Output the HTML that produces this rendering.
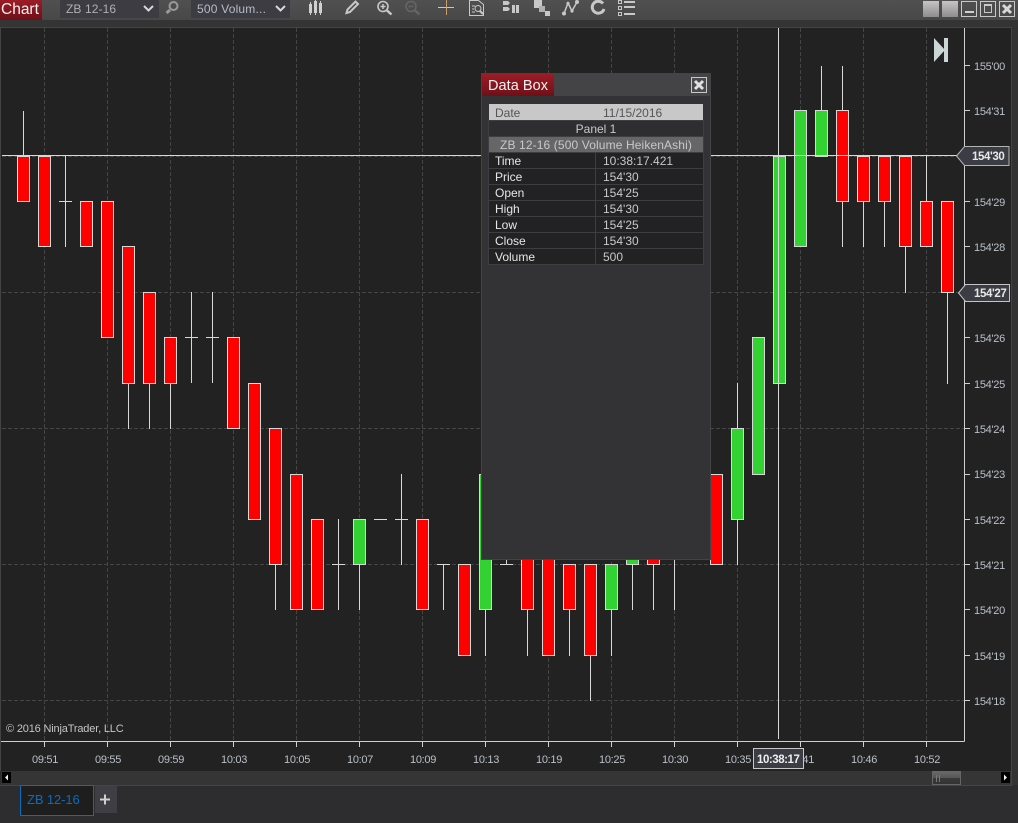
<!DOCTYPE html>
<html><head><meta charset="utf-8"><style>
html,body{margin:0;padding:0;background:#2d2d30;}
body{width:1018px;height:823px;overflow:hidden;position:relative;font-family:"Liberation Sans",sans-serif;}
svg{position:absolute;left:0;top:0;}
text{font-family:"Liberation Sans",sans-serif;}
.r{fill:#f00;stroke:#d8d8d8;stroke-width:1;}
.g{fill:#32d232;stroke:#d8d8d8;stroke-width:1;}
.ax{font-size:11px;fill:#b9c0c6;letter-spacing:-.3px;}
.dt{font-size:12px;fill:#e6e6e6;}
.dv{font-size:12px;fill:#c8c8c8;}
</style></head><body>
<svg width="1018" height="823" viewBox="0 0 1018 823">
<defs>
<linearGradient id="red" x1="0" y1="0" x2="0" y2="1"><stop offset="0" stop-color="#9c1c26"/><stop offset="1" stop-color="#6e1018"/></linearGradient>
<linearGradient id="tb" x1="0" y1="0" x2="0" y2="1"><stop offset="0" stop-color="#505050"/><stop offset="1" stop-color="#484848"/></linearGradient>
<linearGradient id="btn" x1="0" y1="0" x2="0" y2="1"><stop offset="0" stop-color="#c6c4c4"/><stop offset="1" stop-color="#8e8c8c"/></linearGradient>
<linearGradient id="th" x1="0" y1="0" x2="0" y2="1"><stop offset="0" stop-color="#6a6a6a"/><stop offset=".5" stop-color="#555"/><stop offset=".5" stop-color="#3a3a3a"/><stop offset="1" stop-color="#333"/></linearGradient>
</defs>

<!-- toolbar -->
<rect x="0" y="0" width="1018" height="20" fill="url(#tb)"/>
<rect x="0" y="20" width="1018" height="7" fill="#343434"/>
<rect x="0" y="27" width="1012" height="1" fill="#444"/>
<rect x="0" y="0" width="42" height="20" fill="url(#red)"/>
<text x="1" y="14" font-size="15.500" fill="#f2f2f2">Chart</text>
<rect x="60" y="0" width="99" height="18" fill="#3c3c42"/>
<text x="66" y="13" font-size="12" letter-spacing=".1" fill="#b0b0b0">ZB 12-16</text>
<path d="M144 6l4.500 4.500 4.500-4.500" fill="none" stroke="#d8d8d8" stroke-width="2"/>
<g fill="none" stroke="#9a9a9a"><circle cx="173.500" cy="6" r="4" stroke-width="2"/><path d="M170 10l-3.500 3" stroke-width="3"/></g>
<rect x="191" y="0" width="99" height="18" fill="#3c3c42"/>
<text x="197" y="13" font-size="12" letter-spacing=".2" fill="#b4bcc8">500 Volum...</text>
<path d="M276 6l4.500 4.500 4.500-4.500" fill="none" stroke="#d8d8d8" stroke-width="2"/>
<!-- candles icon -->
<g fill="#cfcfcf"><rect x="309" y="4" width="3" height="9"/><rect x="310" y="2" width="1" height="13"/><rect x="314" y="1" width="3" height="12"/><rect x="315" y="0" width="1" height="15"/><rect x="319" y="3" width="3" height="10"/><rect x="320" y="1" width="1" height="14"/></g>
<!-- pencil -->
<path d="M346.500 13l1-3.500 8-8 2.500 2.500-8 8z" fill="none" stroke="#c8c8c8" stroke-width="2"/>
<!-- zoom in -->
<g fill="none" stroke="#c8c8c8"><circle cx="383" cy="6.500" r="5" stroke-width="1.600"/><path d="M387 10.500l4.500 4" stroke-width="2.500"/><path d="M380.500 6.500h5M383 4v5" stroke-width="1.500"/></g>
<!-- zoom out -->
<g fill="none" stroke="#656565"><circle cx="411" cy="6.500" r="5" stroke-width="1.600"/><path d="M415 10.500l4.500 4" stroke-width="2.500"/><path d="M408.500 6.500h5" stroke-width="1.500"/></g>
<!-- crosshair -->
<path d="M438 7.500h16" stroke="#c8c8c8"/><path d="M446.500 0v15" stroke="#c8a070"/>
<!-- data box icon -->
<g fill="none" stroke="#c8c8c8"><path d="M469.500 .5h9l5 4v11h-14z"/><circle cx="478" cy="8.500" r="3"/><path d="M480 11l3 3" stroke-width="2"/><path d="M472 6h3M472 9h2M472 12h3"/></g>
<!-- orders icon -->
<g fill="#c8c8c8"><path d="M503 1h5l2 2-2 2h-5zM503 7h5l2 2-2 2h-5z"/><rect x="512" y="5" width="3" height="8"/><rect x="516" y="5" width="3" height="8"/></g>
<!-- stacked -->
<g fill="#c8c8c8"><rect x="534" y="0" width="8" height="8"/><rect x="539" y="6" width="6" height="6" fill="#b0b0b0"/><rect x="545" y="11" width="5" height="5"/></g>
<!-- drawing -->
<g fill="none" stroke="#c8c8c8" stroke-width="1.500"><path d="M564 13.500l4-10.500 4 8 5-9"/></g><g fill="#c8c8c8"><circle cx="564" cy="13.500" r="2"/><circle cx="568" cy="3.500" r="1.600"/><circle cx="572" cy="11" r="1.600"/><circle cx="577" cy="2" r="2"/></g>
<!-- refresh -->
<path d="M603 3.500A6 6 0 1 0 604 9" fill="none" stroke="#c8c8c8" stroke-width="3"/><path d="M593 2a7 7 0 0 1 7-2v3z" fill="#c8c8c8"/>
<!-- list -->
<g fill="#c8c8c8"><rect x="624" y="1" width="11" height="2"/><rect x="624" y="6" width="11" height="2"/><rect x="624" y="13" width="11" height="2"/></g>
<g fill="none" stroke="#c8c8c8"><rect x="618.500" y=".5" width="3" height="3"/><rect x="618.500" y="6.500" width="3" height="3"/><rect x="618.500" y="12.500" width="3" height="3"/></g>
<!-- window buttons -->
<rect x="923" y="1" width="16" height="16" fill="url(#btn)"/>
<rect x="942" y="1" width="16" height="16" fill="url(#btn)"/>
<g fill="none" stroke="#c8c8c8" stroke-width="1"><rect x="961.500" y="1.500" width="15" height="15"/><rect x="980.500" y="1.500" width="15" height="15"/><rect x="999.500" y="1.500" width="15" height="15"/><rect x="984.500" y="5.500" width="7" height="7"/></g>
<rect x="965" y="11" width="9" height="2" fill="#d0d0d0"/>
<rect x="984" y="4" width="8" height="2" fill="#c8c8c8"/>
<path d="M1003 5l8 8M1011 5l-8 8" stroke="#d8d8d8" stroke-width="3"/>

<!-- chart area -->
<rect x="1" y="28" width="1010" height="743" fill="#222"/>
<rect x="0" y="27" width="1" height="744" fill="#444"/>
<rect x="1011" y="27" width="7" height="758" fill="#333"/>
<rect x="1011" y="27" width="1" height="758" fill="#444"/>
<!-- grid -->
<g stroke="#454545" stroke-dasharray="4 2" fill="none">
<path d="M44.500 28V740M107.500 28V740M170.500 28V740M233.500 28V740M296.500 28V740M359.500 28V740M422.500 28V740M485.500 28V740M548.500 28V740M611.500 28V740M674.500 28V740M737.500 28V740M800.500 28V740M863.500 28V740M926.500 28V740"/>
<path d="M2 156.500H964M2 292.500H964M2 428.500H964M2 564.500H964M2 700.500H964"/>
</g>
<!-- wicks + dojis -->
<path stroke="#d8d8d8" fill="none" d="M23.500 111V156M65.500 156V247M59 201.500H72M128.500 383V429M149.500 383V429M170.500 383V429M191.500 292V383M185 337.500H198M212.500 292V383M206 337.500H219M275.500 564V610M338.500 519V610M332 564.500H345M359.500 564V610M374 519.500H387M401.500 474V565M395 519.500H408M443.500 564V610M437 564.500H450M485.500 609V656M506.500 555V565M500 564.500H513M527.500 609V656M569.500 609V656M590.500 655V701M611.500 609V656M632.500 564V610M653.500 564V610M674.500 555V610M737.500 383V429M737.500 519V565M821.500 66V111M842.500 66V111M842.500 201V247M863.500 201V247M884.500 201V247M905.500 246V293M926.500 156V201M947.500 292V384"/>
<!-- bodies -->
<rect class="r" x="17.500" y="156.500" width="12" height="45"/>
<rect class="r" x="38.500" y="156.500" width="12" height="90"/>
<rect class="r" x="80.500" y="201.500" width="12" height="45"/>
<rect class="r" x="101.500" y="201.500" width="12" height="136"/>
<rect class="r" x="122.500" y="246.500" width="12" height="137"/>
<rect class="r" x="143.500" y="292.500" width="12" height="91"/>
<rect class="r" x="164.500" y="337.500" width="12" height="46"/>
<rect class="r" x="227.500" y="337.500" width="12" height="91"/>
<rect class="r" x="248.500" y="383.500" width="12" height="136"/>
<rect class="r" x="269.500" y="428.500" width="12" height="136"/>
<rect class="r" x="290.500" y="474.500" width="12" height="135"/>
<rect class="r" x="311.500" y="519.500" width="12" height="90"/>
<rect class="g" x="353.500" y="519.500" width="12" height="45"/>
<rect class="r" x="416.500" y="519.500" width="12" height="90"/>
<rect class="r" x="458.500" y="564.500" width="12" height="91"/>
<rect class="g" x="479.500" y="474.500" width="12" height="135"/>
<rect class="r" x="521.500" y="519.500" width="12" height="90"/>
<rect class="r" x="542.500" y="519.500" width="12" height="136"/>
<rect class="r" x="563.500" y="564.500" width="12" height="45"/>
<rect class="r" x="584.500" y="564.500" width="12" height="91"/>
<rect class="g" x="605.500" y="564.500" width="12" height="45"/>
<rect class="g" x="626.500" y="519.500" width="12" height="45"/>
<rect class="r" x="647.500" y="519.500" width="12" height="45"/>
<rect class="r" x="710.500" y="474.500" width="12" height="90"/>
<rect class="g" x="731.500" y="428.500" width="12" height="91"/>
<rect class="g" x="752.500" y="337.500" width="12" height="137"/>
<rect class="g" x="773.500" y="156.500" width="12" height="227"/>
<rect class="g" x="794.500" y="110.500" width="12" height="136"/>
<rect class="g" x="815.500" y="110.500" width="12" height="46"/>
<rect class="r" x="836.500" y="110.500" width="12" height="91"/>
<rect class="r" x="857.500" y="156.500" width="12" height="45"/>
<rect class="r" x="878.500" y="156.500" width="12" height="45"/>
<rect class="r" x="899.500" y="156.500" width="12" height="90"/>
<rect class="r" x="920.500" y="201.500" width="12" height="45"/>
<rect class="r" x="941.500" y="201.500" width="12" height="91"/>
<!-- price line and crosshair -->
<path d="M2 155.500H958" stroke="#d8d8d8"/>
<path d="M778.500 28V739" stroke="#d8d8d8"/>
<!-- axes -->
<path d="M964.500 28V741.500M1 741.500H964.500" stroke="#d0d0d0" fill="none"/>
<path stroke="#d0d0d0" d="M964 65.500h6M964 110.500h6M964 201.500h6M964 246.500h6M964 337.500h6M964 383.500h6M964 428.500h6M964 474.500h6M964 519.500h6M964 564.500h6M964 609.500h6M964 655.500h6M964 700.500h6M44.500 742v5M107.500 742v5M170.500 742v5M233.500 742v5M296.500 742v5M359.500 742v5M422.500 742v5M485.500 742v5M548.500 742v5M611.500 742v5M674.500 742v5M737.500 742v5M800.500 742v5M863.500 742v5M926.500 742v5"/>
<g class="ax">
<text x="974" y="70">155'00</text><text x="974" y="115">154'31</text>
<text x="974" y="206">154'29</text><text x="974" y="251">154'28</text>
<text x="974" y="342">154'26</text><text x="974" y="388">154'25</text><text x="974" y="433">154'24</text><text x="974" y="478">154'23</text><text x="974" y="524">154'22</text><text x="974" y="569">154'21</text><text x="974" y="614">154'20</text><text x="974" y="660">154'19</text><text x="974" y="705">154'18</text>
<text x="32" y="763">09:51</text><text x="95" y="763">09:55</text><text x="158" y="763">09:59</text><text x="221" y="763">10:03</text><text x="284" y="763">10:05</text><text x="347" y="763">10:07</text><text x="410" y="763">10:09</text><text x="473" y="763">10:13</text><text x="536" y="763">10:19</text><text x="599" y="763">10:25</text><text x="662" y="763">10:30</text><text x="725" y="763">10:35</text><text x="788" y="763">10:41</text><text x="851" y="763">10:46</text><text x="914" y="763">10:52</text>
</g>
<text x="6" y="732" font-size="11" letter-spacing="-.17" fill="#c4c4c4">© 2016 NinjaTrader, LLC</text>
<!-- price flags -->
<path d="M956.500 156l8-9.500h44.500v19h-44.500z" fill="#3c3c44" stroke="#b4b4b4"/>
<text x="972" y="160" font-size="11.500" font-weight="bold" letter-spacing="-.4" fill="#e8e8e8">154'30</text>
<path d="M958.500 293l7-8.500h44v17h-44z" fill="#3c3c44" stroke="#c4c4c4"/>
<text x="974" y="297" font-size="11.500" font-weight="bold" letter-spacing="-.4" fill="#e8e8e8">154'27</text>
<!-- time marker -->
<rect x="753.500" y="748.500" width="50" height="20" fill="#3c3c44" stroke="#c8c8c8"/>
<text x="757" y="763" font-size="11.500" font-weight="bold" letter-spacing="-.45" fill="#efefef">10:38:17</text>
<!-- skip icon -->
<path d="M934 38l11 12-11 12z" fill="#cdd6d6"/><rect x="944" y="38" width="4" height="24" fill="#cdd6d6"/>

<!-- data box -->
<rect x="481.500" y="73.500" width="229" height="486" fill="#333335" stroke="#444"/>
<rect x="482" y="74" width="229" height="22" fill="#444446"/>
<rect x="482" y="74" width="72" height="22" fill="url(#red)"/>
<text x="488" y="90" font-size="14.500" letter-spacing=".05" fill="#f2f2f2">Data Box</text>
<rect x="691.500" y="77.500" width="15" height="15" fill="#4a4a4c" stroke="#c8c8c8"/>
<path d="M695 81l8 8M703 81l-8 8" stroke="#e0e0e0" stroke-width="3"/>
<rect x="489" y="104" width="214" height="16" fill="#c8c8c8"/>
<rect x="489" y="120" width="214" height="17" fill="#2e2e30"/>
<rect x="489" y="137" width="214" height="16" fill="#666"/>
<rect x="489" y="153" width="214" height="112" fill="#222"/>
<path stroke="#3e3e42" fill="none" d="M488.500 120.500H703.500M488.500 136.500H703.500M488.500 152.500H703.500M488.500 168.500H703.500M488.500 184.500H703.500M488.500 200.500H703.500M488.500 216.500H703.500M488.500 232.500H703.500M488.500 248.500H703.500M488.500 264.500H703.500M488.500 120V265M703.500 120V265M595.500 153V265"/>
<text x="495" y="117" font-size="12" fill="#555">Date</text>
<text x="603" y="117" font-size="12" fill="#555">11/15/2016</text>
<text x="596" y="133" font-size="12" text-anchor="middle" fill="#c8c8c8">Panel 1</text>
<text x="596" y="149" font-size="12" letter-spacing=".12" text-anchor="middle" fill="#c8c8c8">ZB 12-16 (500 Volume HeikenAshi)</text>
<text class="dt" x="495" y="165">Time</text><text class="dv" x="603" y="165">10:38:17.421</text>
<text class="dt" x="495" y="181">Price</text><text class="dv" x="603" y="181">154'30</text>
<text class="dt" x="495" y="197">Open</text><text class="dv" x="603" y="197">154'25</text>
<text class="dt" x="495" y="213">High</text><text class="dv" x="603" y="213">154'30</text>
<text class="dt" x="495" y="229">Low</text><text class="dv" x="603" y="229">154'25</text>
<text class="dt" x="495" y="245">Close</text><text class="dv" x="603" y="245">154'30</text>
<text class="dt" x="495" y="261">Volume</text><text class="dv" x="603" y="261">500</text>

<!-- scrollbar -->
<rect x="1" y="771" width="1010" height="14" fill="#353535"/>
<rect x="0" y="785" width="1012" height="1" fill="#444"/>
<rect x="2" y="772" width="9" height="11" fill="#000"/>
<path d="M5 777.500l3-3v6z" fill="#eee"/>
<rect x="1001" y="772" width="9" height="11" fill="#000"/>
<path d="M1007 777.500l-3-3v6z" fill="#eee"/>
<rect x="932.500" y="771.500" width="28" height="13" fill="url(#th)" stroke="#666"/>
<path d="M936.500 775v7M939.500 775v7" stroke="#777"/>
<!-- tabs -->
<rect x="20.500" y="785.500" width="73" height="30" fill="#1e1e1e" stroke="#0a6cbd"/>
<text x="27" y="804" font-size="13" letter-spacing="-.1" fill="#0a6cbd">ZB 12-16</text>
<rect x="95" y="786" width="22" height="27" fill="#3e3e44"/>
<path d="M105 794.500v10M100 799.500h10" stroke="#d0d0d0" stroke-width="2"/>
</svg>
</body></html>
